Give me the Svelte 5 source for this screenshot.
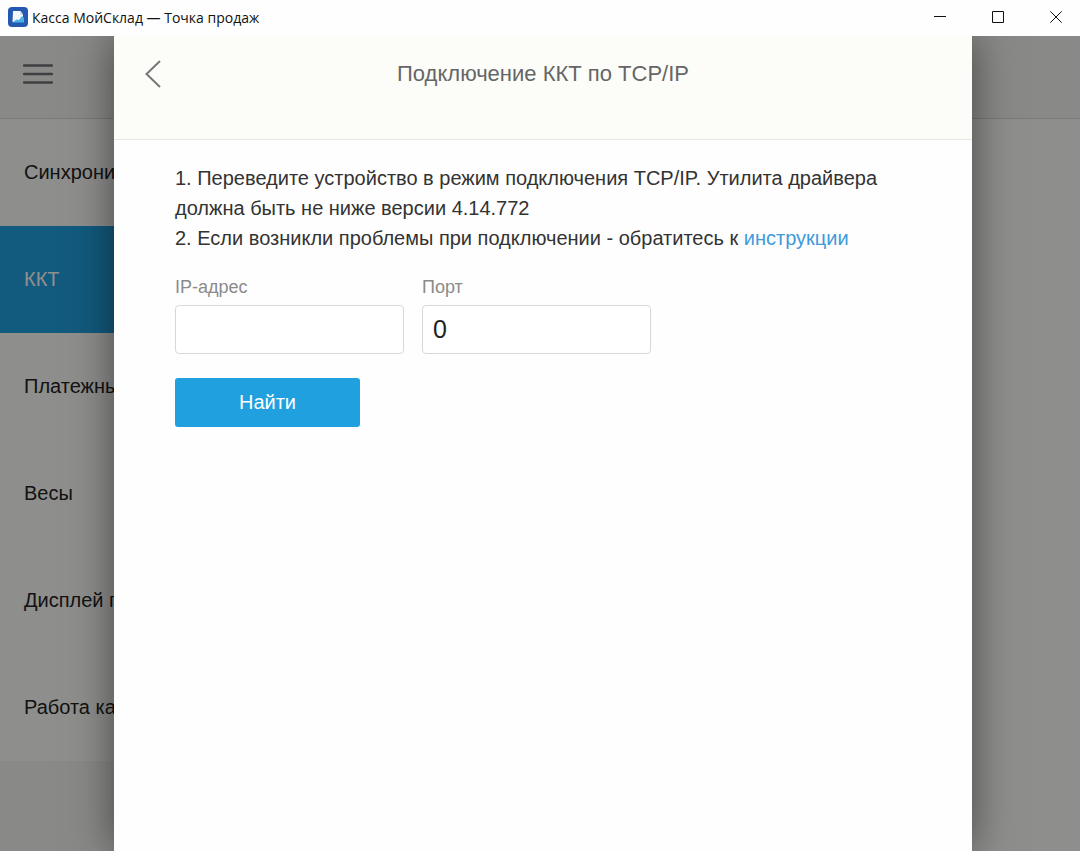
<script lang="ts">
    const sections = [
        { id: 'sync', name: 'Синхронизация' },
        { id: 'kkt', name: 'ККТ' },
        { id: 'payment', name: 'Платежные системы' },
        { id: 'scales', name: 'Весы' },
        { id: 'display', name: 'Дисплей покупателя' },
        { id: 'cashier', name: 'Работа кассира' }
    ];

    let active = 'kkt';
    let address = '';
    let port = '0';
</script>

<div class="window">
    <header class="titlebar">
        <svg class="logo" viewBox="0 0 20 20" aria-hidden="true">
            <rect width="20" height="20" rx="4" fill="#2559b0" />
            <path d="M5 4h7.500l2.500 3.500V15H4.500z" fill="#f2f7fc" />
            <path d="M12.500 4v3.500H15z" fill="#a9cdea" />
            <path d="M4.500 15.500 8.500 12.500l2.500.5 3-4L16 11v4.500z" fill="#4db0e6" />
        </svg>
        <span class="app-name">Касса МойСклад — Точка продаж</span>
        <div class="controls">
            <button type="button" aria-label="Свернуть">
                <svg viewBox="0 0 12 12"><path d="M0 5.500h12" /></svg>
            </button>
            <button type="button" aria-label="Развернуть">
                <svg viewBox="0 0 12 12"><path d="M.5.5h11v11H.5z" /></svg>
            </button>
            <button type="button" aria-label="Закрыть">
                <svg viewBox="0 0 12 12"><path d="M.3.300l11.400 11.400M11.700.300.3 11.700" /></svg>
            </button>
        </div>
    </header>

    <div class="workspace">
        <div class="toolbar">
            <button type="button" class="menu-button" aria-label="Меню">
                <svg viewBox="0 0 30 22">
                    <path d="M1 2.500h28M1 11h28M1 19.500h28" />
                </svg>
            </button>
        </div>
        <div class="columns">
            <nav class="sidebar">
                {#each sections as section}
                    <button
                        type="button"
                        class="section"
                        class:active={section.id === active}
                        on:click={() => (active = section.id)}
                    >
                        {section.name}
                    </button>
                {/each}
            </nav>
            <div class="content"></div>
        </div>

        <!-- Connection dialog over the settings screen -->
        <div class="backdrop">
            <section class="dialog" role="dialog" aria-modal="true" aria-labelledby="dialog-title">
                <div class="dialog-header">
                    <button type="button" class="back" aria-label="Назад">
                        <svg viewBox="0 0 18 30"><path d="M16 2 2.500 15 16 28" /></svg>
                    </button>
                    <h1 id="dialog-title">Подключение ККТ по TCP/IP</h1>
                </div>
                <form class="dialog-body" on:submit|preventDefault>
                    <p>
                        1. Переведите устройство в режим подключения TCP/IP. Утилита драйвера
                        должна быть не ниже версии 4.14.772
                    </p>
                    <p>
                        2. Если возникли проблемы при подключении - обратитесь к
                        <a href="#help">инструкции</a>
                    </p>
                    <div class="fields">
                        <div class="field">
                            <label for="address">IP-адрес</label>
                            <input id="address" type="text" bind:value={address} />
                        </div>
                        <div class="field">
                            <label for="port">Порт</label>
                            <input id="port" type="text" bind:value={port} />
                        </div>
                    </div>
                    <button type="submit" class="submit">Найти</button>
                </form>
            </section>
        </div>
    </div>
</div>

<style>
    :global(body) {
        margin: 0;
    }

    .window {
        display: flex;
        flex-direction: column;
        min-height: 100vh;
        font-family: 'Liberation Sans', Arial, sans-serif;
        background: #fefefe;
    }

    button {
        padding: 0;
        border: none;
        background: none;
        font: inherit;
        cursor: pointer;
    }

    svg {
        display: block;
        fill: none;
    }

    .titlebar {
        display: flex;
        align-items: center;
        height: 36px;
        box-sizing: border-box;
        padding: 0 12px 2px 8px;
    }

    .logo {
        width: 20px;
        height: 20px;
        margin-right: 4px;
    }

    .app-name {
        flex: 1;
        font-family: 'Open Sans', 'Noto Sans', sans-serif;
        font-size: 14px;
        color: #111;
    }

    .controls {
        display: flex;
        gap: 34px;
    }

    .controls button {
        display: flex;
        align-items: center;
        justify-content: center;
        width: 24px;
        height: 34px;
    }

    .controls svg {
        width: 12px;
        height: 12px;
        stroke: #111;
    }

    .workspace {
        position: relative;
        flex: 1;
        display: flex;
        flex-direction: column;
    }

    .toolbar {
        height: 83px;
        padding-left: 23px;
        padding-bottom: 6px;
        box-sizing: border-box;
        display: flex;
        align-items: center;
        background: #f5f5f3;
        border-bottom: 1px solid #d8d8d6;
    }

    .menu-button svg {
        width: 30px;
        height: 22px;
        stroke: #736f72;
        stroke-width: 2.5;
        stroke-linecap: round;
    }

    .columns {
        flex: 1;
        display: flex;
    }

    .sidebar {
        width: 360px;
        background: #f5f5f3;
    }

    .section {
        display: block;
        width: 100%;
        height: 107px;
        padding: 0 24px;
        text-align: left;
        font-size: 20px;
        color: #222;
        background: #fefefb;
    }

    .section.active {
        color: #fff;
        background: #20a0e0;
    }

    .content {
        flex: 1;
        background: #fefefb;
    }

    .backdrop {
        position: absolute;
        inset: 0;
        display: flex;
        padding: 0 108px 0 114px;
        overflow: hidden;
        background: rgba(0, 0, 0, 0.44);
    }

    .dialog {
        flex: 1;
        background: #fefefe;
        box-shadow: 0 0 40px rgba(0, 0, 0, 0.5);
    }

    .dialog-header {
        display: grid;
        grid-template-columns: 60px 1fr 60px;
        align-items: center;
        height: 104px;
        padding-bottom: 28px;
        box-sizing: border-box;
        background: #fcfdf9;
        border-bottom: 1px solid #e6e7e5;
    }

    .back {
        justify-self: end;
        margin-right: 12px;
    }

    .back svg {
        width: 18px;
        height: 30px;
        stroke: #777;
        stroke-width: 2;
    }

    h1 {
        margin: 0;
        font-size: 22px;
        font-weight: normal;
        text-align: center;
        color: #666;
    }

    .dialog-body {
        padding: 23px 61px;
    }

    p {
        max-width: 720px;
        margin: 0;
        font-size: 20px;
        line-height: 30px;
        color: #333;
    }

    a {
        color: #3e9bdc;
        text-decoration: none;
    }

    .fields {
        display: flex;
        gap: 18px;
        margin: 22px 0 24px;
    }

    .field {
        display: flex;
        flex-direction: column;
        gap: 6px;
        width: 229px;
    }

    label {
        font-size: 18px;
        line-height: 24px;
        color: #8b8b8b;
    }

    input {
        height: 49px;
        box-sizing: border-box;
        padding: 0 10px;
        border: 1px solid #d8d8d8;
        border-radius: 4px;
        background: #fff;
        font-family: inherit;
        font-size: 25px;
        color: #222;
    }

    .submit {
        width: 185px;
        height: 49px;
        border-radius: 3px;
        background: #20a0de;
        font-size: 20px;
        color: #fff;
    }
</style>
